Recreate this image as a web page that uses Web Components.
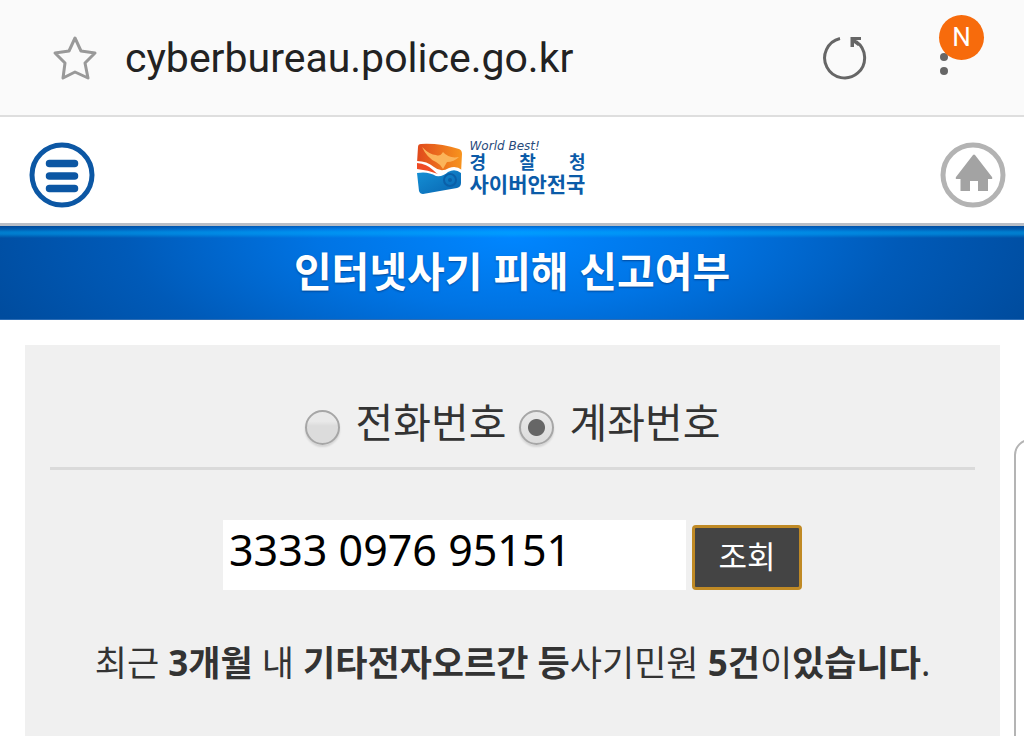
<!DOCTYPE html>
<html lang="ko">
<head>
<meta charset="utf-8">
<meta name="viewport" content="width=device-width, initial-scale=1">
<title>인터넷사기 피해 신고여부</title>
<style>
  html, body { height: 100%; }
  body {
    margin: 0;
    overflow: hidden;
    background: #fff;
    color: #333;
    font-family: "Noto Sans", "Noto Sans CJK KR", sans-serif;
  }
</style>
</head>
<body>
<police-app></police-app>

<script>
/** Attach an open shadow root filled from markup. */
function mount(host, html) {
  const template = document.createElement("template");
  template.innerHTML = html;
  host.attachShadow({ mode: "open" }).appendChild(template.content.cloneNode(true));
}

/** <icon-button label="..."> – bare button that holds a slotted icon. */
customElements.define(
  "icon-button",
  class IconButton extends HTMLElement {
    constructor() {
      super();
      mount(this, `
        <style>
          :host { display: block; flex: none; }
          button {
            display: block;
            margin: 0;
            padding: 0;
            border: 0;
            background: none;
            cursor: pointer;
          }
          ::slotted(svg) { display: block; }
        </style>
        <button type="button"><slot></slot></button>
      `);
    }

    connectedCallback() {
      this.shadowRoot
        .querySelector("button")
        .setAttribute("aria-label", this.getAttribute("label") || "");
    }
  }
);

/** <browser-bar> – address bar of the mobile browser. */
customElements.define(
  "browser-bar",
  class BrowserBar extends HTMLElement {
    constructor() {
      super();
      mount(this, `
        <style>
          :host {
            display: flex;
            align-items: center;
            height: 115px;
            padding: 0 72px 0 52px;
            border-bottom: 2px solid #dedede;
            background: #fafafa;
            box-sizing: content-box;
          }
          .url {
            flex: 1;
            min-width: 0;
            margin-left: 27px;
            color: #222;
            font: 41px/56px Roboto, sans-serif;
            white-space: nowrap;
          }
          .menu { position: relative; margin-left: 68px; }
          .badge {
            position: absolute;
            left: 3px;
            top: -20px;
            width: 45px;
            height: 45px;
            border-radius: 50%;
            background: #f76b0c;
            color: #fff;
            font: 26px/45px Roboto, sans-serif;
            text-align: center;
            pointer-events: none;
          }
        </style>
        <icon-button label="즐겨찾기">
          <svg width="46" height="46" viewBox="0 0 46 46" fill="none" stroke="#999" stroke-width="3" stroke-linejoin="round">
            <path d="M23 3 L29 16 L43 18 L33 28 L36 43 L23 37 L11 43 L13 28 L3 18 L17 16 Z"/>
          </svg>
        </icon-button>
        <div class="url"><slot></slot></div>
        <icon-button label="새로고침">
          <svg width="46" height="46" viewBox="0 0 46 46">
            <path d="M18 3.500 A20 20 0 1 0 34 6.500" fill="none" stroke="#666" stroke-width="3"/>
            <path d="M28.500 2 H39 V5 H34 L38 9 L36 11 L32 8 V12 H28.500 Z" fill="#666"/>
          </svg>
        </icon-button>
        <div class="menu">
          <icon-button label="메뉴">
            <svg width="16" height="46" viewBox="0 0 16 46" fill="#666">
              <circle cx="8" cy="22" r="4"/><circle cx="8" cy="36" r="4"/>
            </svg>
          </icon-button>
          <span class="badge">N</span>
        </div>
      `);
    }
  }
);

/** <site-logo> – emblem with the bureau's name. */
customElements.define(
  "site-logo",
  class SiteLogo extends HTMLElement {
    constructor() {
      super();
      mount(this, `
        <style>
          :host { display: block; }
          a {
            display: flex;
            align-items: center;
            gap: 7px;
            color: #0b5ba8;
            text-decoration: none;
          }
          .name {
            display: grid;
            width: 116px;
            font-family: "Liberation Sans", "Noto Sans CJK KR", sans-serif;
            font-weight: 700;
          }
          .slogan {
            color: #274a7c;
            font: italic 12px/13px "DejaVu Sans", sans-serif;
          }
          .top {
            display: flex;
            justify-content: space-between;
            font-size: 18px;
            line-height: 20px;
          }
          .bottom { font-size: 21px; line-height: 24px; white-space: nowrap; }
        </style>
        <a href="#">
          <svg width="47" height="52" viewBox="0 0 47 52" aria-hidden="true">
            <defs>
              <linearGradient id="sky" x1="0" y1="0" x2="1" y2="0">
                <stop offset="0" stop-color="#e0491c"/>
                <stop offset="1" stop-color="#f7941e"/>
              </linearGradient>
              <linearGradient id="sea" x1="0" y1="0" x2="1" y2="1">
                <stop offset="0" stop-color="#1591d6"/>
                <stop offset="1" stop-color="#0864b0"/>
              </linearGradient>
            </defs>
            <path d="M5 2 Q24 1 43 7 Q46 8 46 12 L45 31 Q24 33 17 28 Q10 22 1 21 L2 5 Q2 2 5 2Z" fill="url(#sky)"/>
            <path d="M6 5 Q14 13 20 13 Q24 15 27 10 Q33 17 43 15 Q38 20 31 20 L27 27 Q24 22 20 20 Q11 16 6 5Z" fill="#fbb45a"/>
            <path d="M1 19 Q11 19 18 25 Q25 31 33 26 Q40 23 46 28 L46 33 Q31 38 20 35 Q12 29 1 29Z" fill="#fff"/>
            <path d="M1 21 Q11 22 17 28 Q20 31 22 32 Q12 28 1 27Z" fill="#ef4b25"/>
            <path d="M1 31 Q12 29 20 34 Q27 35 32 30 Q39 26 45 31 L45 41 Q45 45 41 46 L7 52 Q4 52 3 49Z" fill="url(#sea)"/>
            <circle cx="34" cy="38" r="6" fill="none" stroke="#0a5fa8" stroke-width="2"/>
            <circle cx="34" cy="38" r="2" fill="#0a5fa8"/>
          </svg>
          <span class="name">
            <span class="slogan">World Best!</span>
            <span class="top"><span>경</span><span>찰</span><span>청</span></span>
            <span class="bottom">사이버안전국</span>
          </span>
        </a>
      `);
    }
  }
);

/** <site-header> – menu, logo and home. */
customElements.define(
  "site-header",
  class SiteHeader extends HTMLElement {
    constructor() {
      super();
      mount(this, `
        <style>
          :host {
            display: flex;
            align-items: center;
            justify-content: space-between;
            box-sizing: border-box;
            height: 109px;
            padding: 10px 18px 0 29px;
            border-bottom: 3px solid #b9bec6;
            background: #fff;
          }
          site-logo { padding: 0 34px 14px 0; }
        </style>
        <icon-button label="전체메뉴">
          <svg width="66" height="66" viewBox="0 0 66 66" fill="none" stroke="#0c57a4">
            <circle cx="33" cy="33" r="30" stroke-width="5"/>
            <path d="M20.500 21.500 H45.500 M20.500 34 H45.500 M20.500 46.500 H45.500" stroke-width="7.500" stroke-linecap="round"/>
          </svg>
        </icon-button>
        <site-logo></site-logo>
        <icon-button label="홈">
          <svg width="66" height="66" viewBox="0 0 66 66">
            <circle cx="33" cy="33" r="30" fill="none" stroke="#b3b3b3" stroke-width="5"/>
            <path d="M33 13 Q34 12 35 13 L52 35 Q53 37 51 37 H48 V49 H38 V39 H30 V49 H20.500 V37 H17 Q15 37 16 35 Z" fill="#a3a3a3"/>
          </svg>
        </icon-button>
      `);
    }
  }
);

/** <page-banner> – blue strip with the page title. */
customElements.define(
  "page-banner",
  class PageBanner extends HTMLElement {
    constructor() {
      super();
      mount(this, `
        <style>
          :host {
            display: block;
            box-sizing: border-box;
            height: 94px;
            border-bottom: 1px solid #2c6cb4;
            background:
              linear-gradient(rgba(0, 60, 130, .4) 0, rgba(0, 180, 255, .1) 3px, rgba(0, 180, 255, .45) 6px, rgba(0, 180, 255, .45) 8px, transparent 12px),
              radial-gradient(ellipse 54% 220% at 50% 10%, #0086ff 0, #0074e4 35%, #005ab8 70%, #004c9e 100%);
          }
          h1 {
            margin: 0;
            color: #fff;
            font: 700 41px/90px "Noto Sans", "Noto Sans CJK KR", sans-serif;
            text-align: center;
            text-shadow: 0 1px 2px rgba(0, 40, 100, .6);
          }
        </style>
        <h1><slot></slot></h1>
      `);
    }
  }
);

/** <radio-choice value checked> – one radio with its label. */
customElements.define(
  "radio-choice",
  class RadioChoice extends HTMLElement {
    constructor() {
      super();
      mount(this, `
        <style>
          :host { display: block; }
          label {
            display: flex;
            align-items: center;
            gap: 16px;
            font-size: 41px;
            line-height: 60px;
            white-space: nowrap;
          }
          input {
            appearance: none;
            flex: none;
            width: 35px;
            height: 35px;
            margin: 10px 0 0;
            border: 2px solid #a6a6a6;
            border-radius: 50%;
            background: linear-gradient(#e9e9e9 30%, #dcdcdc 45%);
            box-shadow: 0 2px 2px rgba(0, 0, 0, .12);
          }
          input:checked {
            background:
              radial-gradient(circle, #666 8px, transparent 9px),
              linear-gradient(#e9e9e9, #dcdcdc);
          }
        </style>
        <label><input type="radio"><slot></slot></label>
      `);
      this._input = this.shadowRoot.querySelector("input");
      this._input.addEventListener("change", () =>
        this.dispatchEvent(new CustomEvent("pick", { bubbles: true }))
      );
    }

    connectedCallback() {
      this._input.value = this.getAttribute("value") || "";
      this._input.checked = this.hasAttribute("checked");
    }

    set checked(on) {
      this._input.checked = on;
    }
  }
);

/** <fraud-search> – number type, number field and result line. */
customElements.define(
  "fraud-search",
  class FraudSearch extends HTMLElement {
    constructor() {
      super();
      mount(this, `
        <style>
          :host {
            display: block;
            flex: 1;
            margin: 25px 24px 0 25px;
            padding: 47px 25px 0;
            background: #f0f0f0;
          }
          .types {
            display: flex;
            justify-content: center;
            gap: 12px;
            padding-bottom: 15px;
            border-bottom: 3px solid #dadada;
          }
          form {
            display: flex;
            justify-content: center;
            align-items: flex-end;
            gap: 6px;
            margin: 50px 0 0;
          }
          input, button {
            box-sizing: border-box;
            margin: 0;
            font-family: inherit;
          }
          input {
            flex: 0 1 463px;
            min-width: 0;
            height: 70px;
            padding: 0 6px 12px;
            border: 0;
            background: #fff;
            color: #000;
            font-size: 43px;
          }
          button {
            width: 110px;
            height: 65px;
            padding: 0 0 6px;
            border: 3px solid #c08a25;
            border-radius: 4px;
            background: #444;
            color: #fff;
            font-size: 31px;
          }
          .result {
            margin: 49px 0 0;
            font-size: 35px;
            line-height: 48px;
            text-align: center;
          }
        </style>
        <div class="types" role="radiogroup" aria-label="조회 구분">
          <radio-choice value="phone">전화번호</radio-choice>
          <radio-choice value="account" checked>계좌번호</radio-choice>
        </div>
        <form>
          <input type="text" value="3333 0976 95151" aria-label="계좌번호">
          <button type="submit">조회</button>
        </form>
        <p class="result">최근 <b>3개월</b> 내 <b>기타전자오르간 등</b>사기민원 <b>5건</b>이<b>있습니다</b>.</p>
      `);
      const choices = this.shadowRoot.querySelectorAll("radio-choice");
      this.shadowRoot.addEventListener("pick", (ev) => {
        choices.forEach((c) => (c.checked = c === ev.target));
      });
      this.shadowRoot
        .querySelector("form")
        .addEventListener("submit", (ev) => ev.preventDefault());
    }
  }
);

/** <police-app> – whole page, with the edge handle floating over it. */
customElements.define(
  "police-app",
  class PoliceApp extends HTMLElement {
    constructor() {
      super();
      mount(this, `
        <style>
          :host {
            display: flex;
            flex-direction: column;
            position: relative;
            min-height: 100vh;
            overflow: hidden;
          }
          browser-bar, site-header, page-banner { flex: none; }
          .edge {
            position: absolute;
            top: 439px;
            right: -12px;
            bottom: -20px;
            width: 18px;
            border: 2px solid #b4b4b4;
            border-radius: 16px 0 0 16px;
            background: #fff;
          }
        </style>
        <browser-bar>cyberbureau.police.go.kr</browser-bar>
        <site-header></site-header>
        <page-banner>인터넷사기 피해 신고여부</page-banner>
        <fraud-search></fraud-search>
        <div class="edge"></div>
      `);
    }
  }
);
</script>
</body>
</html>
